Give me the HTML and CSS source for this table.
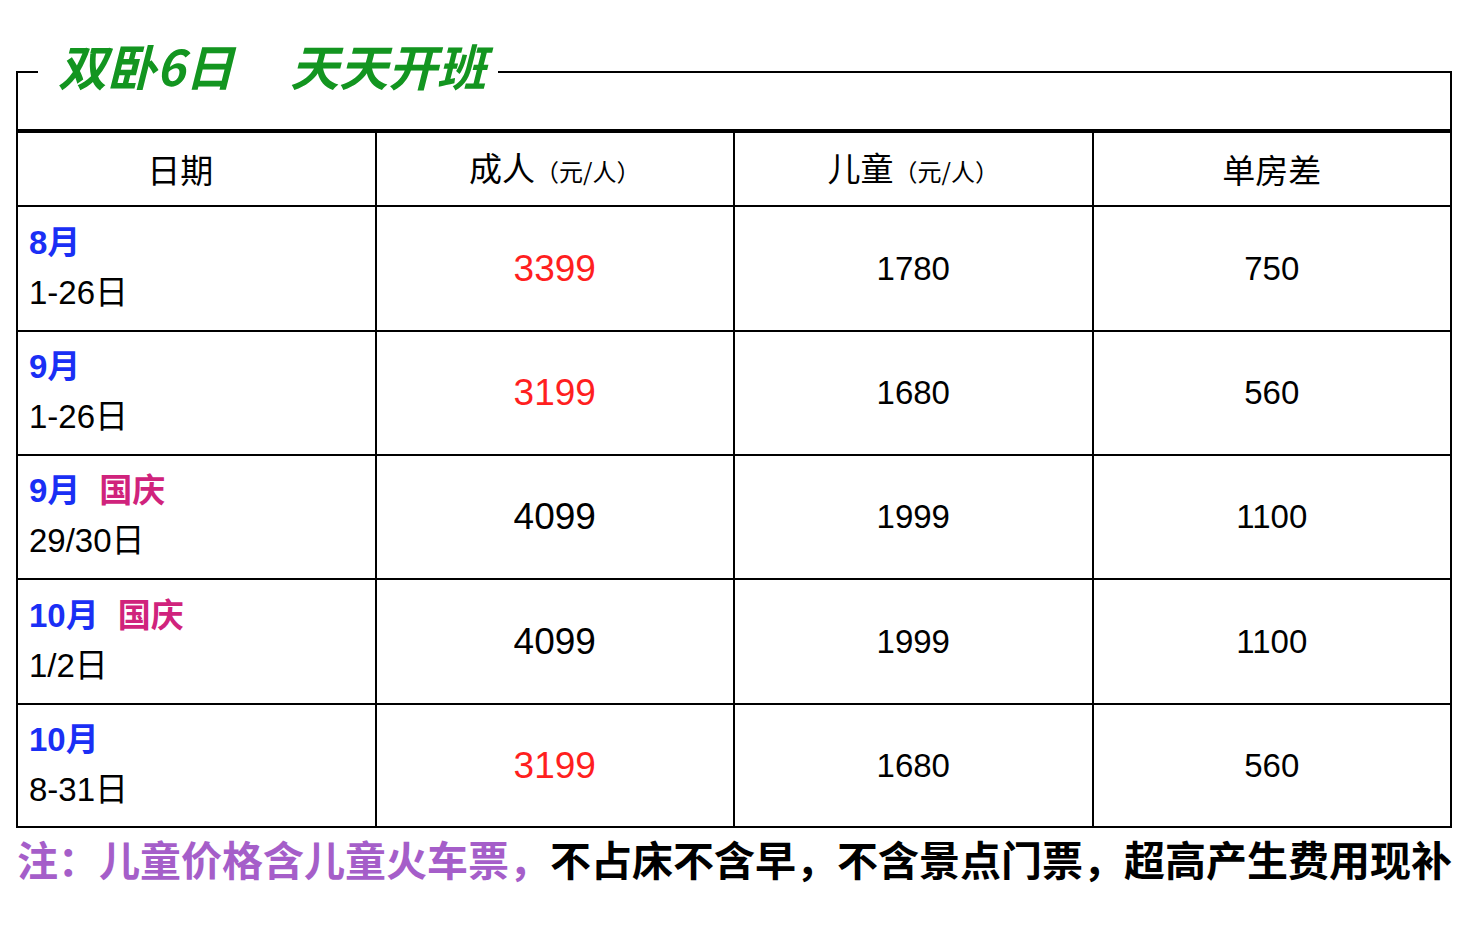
FILE: index.html
```html
<!DOCTYPE html>
<html lang="zh-CN">
<head>
<meta charset="utf-8">
<title>双卧6日 天天开班</title>
<link rel="stylesheet" href="styles.css">
</head>
<body>
<div class="page">
  <fieldset class="frame">
    <legend class="title"><span>双卧6日</span><span class="title-b">天天开班</span></legend>
    <div class="spacer"></div>
  </fieldset>
  <table class="price">
    <thead>
      <tr>
        <th class="h-date">日期</th>
        <th>成人<small>（元/人）</small></th>
        <th>儿童<small>（元/人）</small></th>
        <th>单房差</th>
      </tr>
    </thead>
    <tbody>
      <tr>
        <td class="date"><div class="month">8月</div><div>1-26日</div></td>
        <td class="adult red">3399</td>
        <td class="num">1780</td>
        <td class="num">750</td>
      </tr>
      <tr>
        <td class="date"><div class="month">9月</div><div>1-26日</div></td>
        <td class="adult red">3199</td>
        <td class="num">1680</td>
        <td class="num">560</td>
      </tr>
      <tr>
        <td class="date"><div class="month">9月<span class="holiday">国庆</span></div><div>29/30日</div></td>
        <td class="adult">4099</td>
        <td class="num">1999</td>
        <td class="num">1100</td>
      </tr>
      <tr>
        <td class="date"><div class="month">10月<span class="holiday">国庆</span></div><div>1/2日</div></td>
        <td class="adult">4099</td>
        <td class="num">1999</td>
        <td class="num">1100</td>
      </tr>
      <tr>
        <td class="date"><div class="month">10月</div><div>8-31日</div></td>
        <td class="adult red">3199</td>
        <td class="num">1680</td>
        <td class="num">560</td>
      </tr>
    </tbody>
  </table>
  <p class="note"><span class="note-a">注：儿童价格含儿童火车票，</span><span class="note-b">不占床不含早，不含景点门票，超高产生费用现补</span></p>
</div>
</body>
</html>
```
FILE: styles.css
```css
* { box-sizing: border-box; }

html, body {
  margin: 0;
  padding: 0;
  background: #ffffff;
}

body {
  font-family: "Liberation Sans", "Noto Sans CJK SC", sans-serif;
  color: #000;
}

.page {
  width: 1436px;
  margin-left: 16px;
  padding-top: 40px;
}

.frame {
  margin: 0;
  padding: 0;
  border: 2px solid #000;
  border-bottom: 0;
  min-inline-size: 0;
}

.title {
  margin-left: 20px;
  padding: 0 12px 14px 20px;
  font-family: "Noto Sans CJK SC", sans-serif;
  font-size: 49px;
  line-height: 50px;
  height: 64px;
  font-weight: 700;
  font-style: italic;
  color: #139520;
}

.title-b {
  margin-left: 56px;
}

.spacer {
  height: 25px;
}

.price {
  width: 100%;
  table-layout: fixed;
  border-collapse: separate;
  border-spacing: 0;
  border-left: 2px solid #000;
  border-top: 4px solid #000;
}

.price th,
.price td {
  border-right: 2px solid #000;
  border-bottom: 2px solid #000;
  padding: 0;
  text-align: center;
  vertical-align: middle;
}

.price th {
  height: 74px;
  font-family: "Noto Sans CJK SC", sans-serif;
  font-weight: 400;
  font-size: 33px;
  line-height: 40px;
}

.price th.h-date {
  padding-right: 32px;
}

.price th small {
  font-size: 24px;
}

.price td {
  height: 124px;
}

.price tbody tr:nth-child(1) td,
.price tbody tr:nth-child(4) td {
  height: 125px;
}

.price tbody tr:nth-child(5) td {
  height: 123px;
}

.price td.date {
  text-align: left;
  padding-left: 11px;
  padding-bottom: 2px;
  font-size: 33px;
  line-height: 50px;
  font-family: "Liberation Sans", "Noto Sans CJK SC", sans-serif;
}

.month {
  color: #1a2ff5;
  font-weight: 700;
}

.holiday {
  color: #d0237c;
  margin-left: 19px;
}

.adult {
  font-size: 37px;
}

.num {
  font-size: 33px;
}

.red {
  color: #ff1f1f;
}

.note {
  margin: 0;
  padding-top: 5px;
  padding-left: 1px;
  font-family: "Noto Sans CJK SC", sans-serif;
  font-weight: 700;
  font-size: 41px;
  line-height: 50px;
  white-space: nowrap;
}

.note-a {
  color: #a55ec9;
}

.note-b {
  color: #000;
}
```
